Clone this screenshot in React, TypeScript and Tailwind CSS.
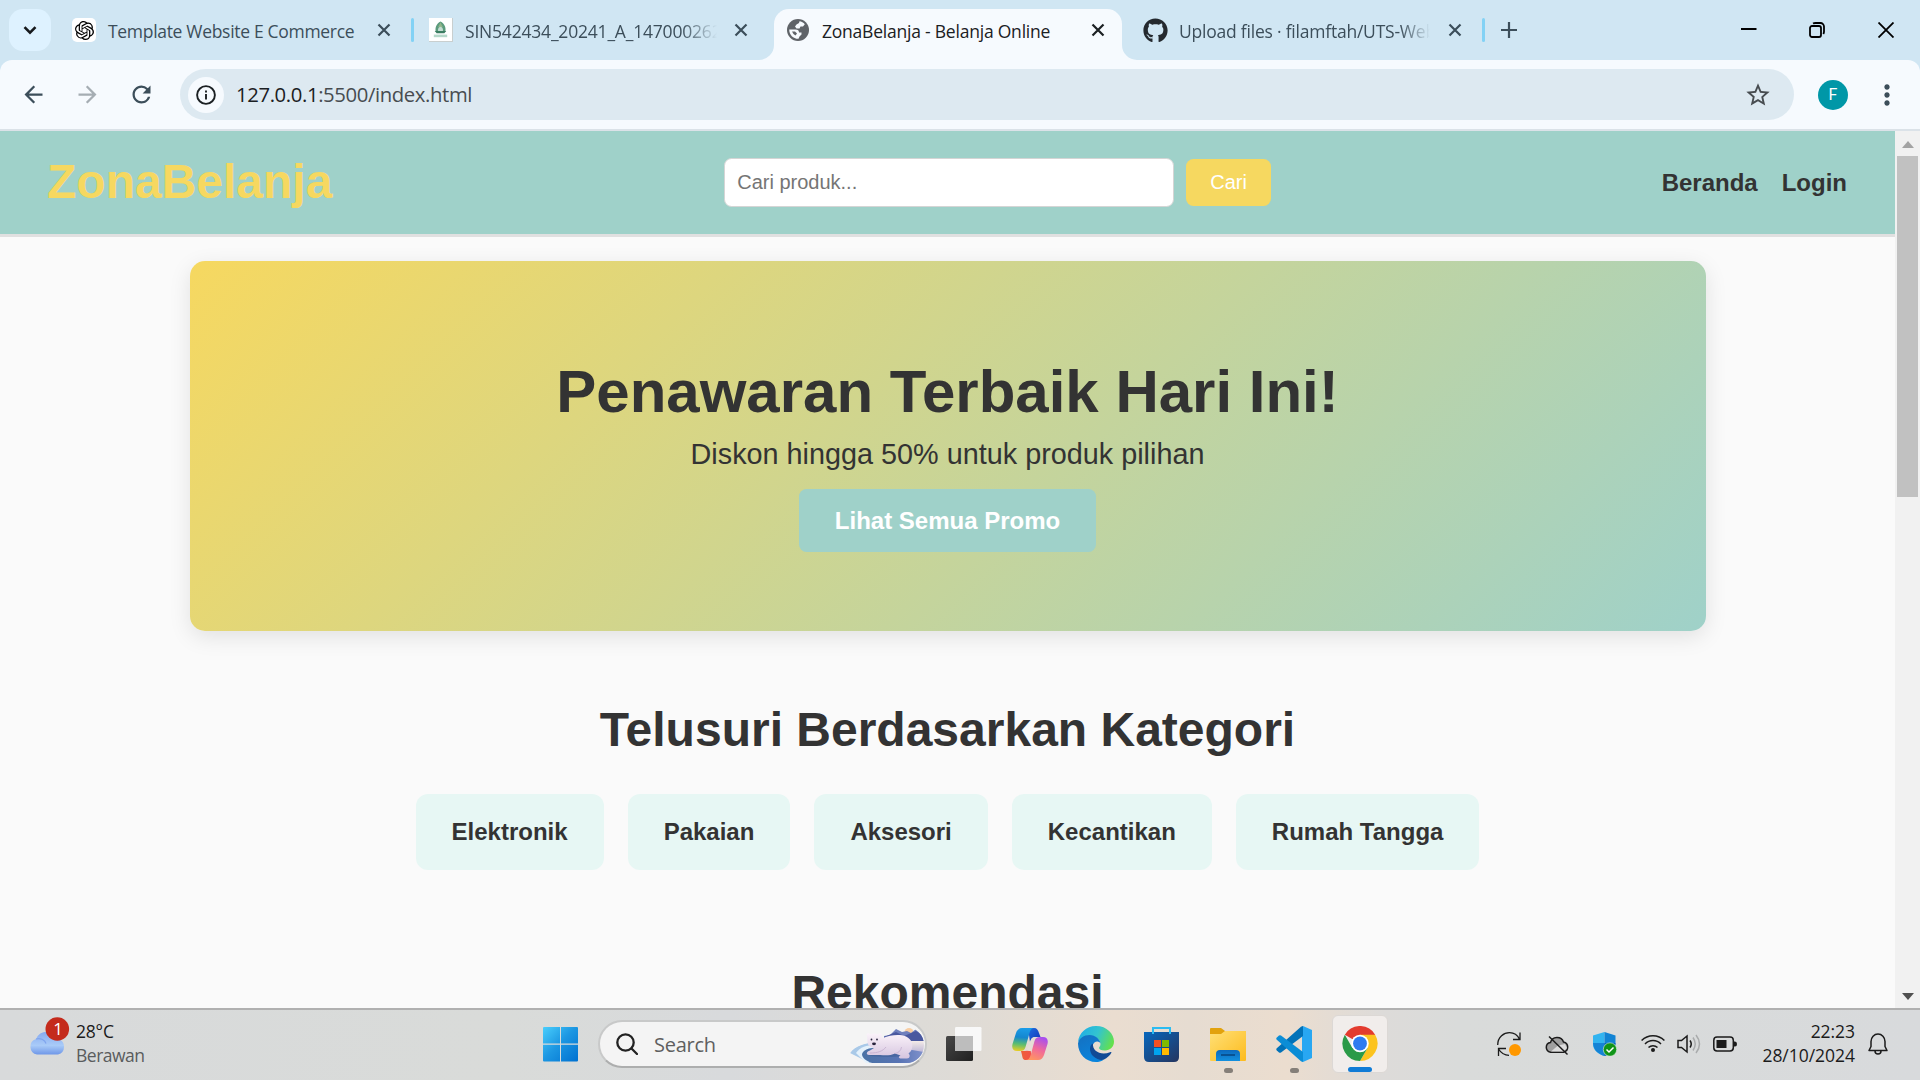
import React from "react";
import { MdArrowBack, MdArrowForward, MdRefresh, MdStarOutline, MdMoreVert } from "react-icons/md";
import { FaGithub } from "react-icons/fa";
import { SiOpenai } from "react-icons/si";

const categories = ["Elektronik", "Pakaian", "Aksesori", "Kecantikan", "Rumah Tangga"];

function Close({ className = "" }: { className?: string }) {
  return (
    <svg viewBox="0 0 14 14" className={`h-3.5 w-3.5 shrink-0 ${className}`} fill="none" stroke="currentColor" strokeWidth="2.2">
      <path d="M1.5 1.5 12.5 12.5M12.5 1.5 1.5 12.5" />
    </svg>
  );
}

function Flare({ flip = false }: { flip?: boolean }) {
  return (
    <svg viewBox="0 0 15 15" className={flip ? "h-[15px] w-[15px] shrink-0 -scale-x-100 self-end" : "h-[15px] w-[15px] shrink-0 self-end"}>
      <path d="M15 0V15H0A15 15 0 0 0 15 0Z" fill="#f6fafe" />
    </svg>
  );
}

function Crest() {
  return (
    <span className="flex h-6 w-6 shrink-0 border-r border-b border-[#c9cfcf] bg-white">
      <svg viewBox="0 0 24 24" className="h-6 w-6">
        <path d="M12 3C8 5 6 9 7 14H17C18 9 16 5 12 3Z" fill="#5b9b7d" />
        <path d="M12 4 9.5 9H14.5Z" fill="#8fb58a" />
        <path d="M12 8.500C10 9 9 11 9.500 13H14.500C15 11 14 9 12 8.500Z" fill="#c3dcd2" />
        <path d="M6 13H18L16 15.500H8Z" fill="#3b7d62" />
        <path d="M5 16.800H19V19.500H5Z" fill="#b5d8ca" />
      </svg>
    </span>
  );
}

function Globe() {
  return (
    <svg viewBox="0 0 22 22" className="ml-[13px] h-[22px] w-[22px] shrink-0">
      <circle cx="11" cy="11" r="11" fill="#5f6368" />
      <path d="M12.500 2.200C14.500 2.500 16.500 3.500 17.800 5.200L16 7.500H13.500L12.500 9.500H9.500L8 7.500 9.500 5.500 12 4Z" fill="#f6fafe" />
      <path d="M2.200 10.500H8.500C11 10.500 12 11.500 12 13.500H14.500V15.500L12.500 17.500 11.500 19.800C6.500 20 2.200 16 2.200 10.500Z" fill="#f6fafe" />
      <path d="M5 12.500H8L10 14.500 8.500 16.500 6.500 15Z" fill="#5f6368" />
    </svg>
  );
}

function TabStrip() {
  return (
    <div className="flex h-[60px] items-center text-[17.5px] leading-6 whitespace-nowrap text-[#3c4e5a]">
      <div className="ml-[9px] flex h-[42px] w-[42px] shrink-0 items-center justify-center rounded-[14px] bg-[#def2ff] text-[#16191c]">
        <svg viewBox="0 0 14 9" className="h-[9px] w-[14px]" fill="none" stroke="currentColor" strokeWidth="2.6">
          <path d="M1.5 1.2 7 6.7 12.5 1.2" />
        </svg>
      </div>
      <div className="ml-[21px] flex h-6 w-6 shrink-0 items-center justify-center rounded-[5px] bg-white text-black">
        <SiOpenai size={19} />
      </div>
      <span className="ml-3 w-[269px] pt-[2px] tracking-[-0.31px]">Template Website E Commerce</span>
      <Close />
      <span className="ml-5 h-6 w-[3px] shrink-0 rounded-full bg-[#83d2f5]" />
      <span className="ml-[15px] flex"><Crest /></span>
      <span className="ml-3 w-[252px] shrink-0 overflow-hidden [mask-image:linear-gradient(to_right,black_86%,transparent)] pt-[2px] tracking-[-0.2px]">SIN542434_20241_A_1470002625</span>
      <Close className="ml-[17px]" />
      <div className="ml-[11px] flex h-full shrink-0">
        <Flare />
        <div className="mt-[9px] flex h-[51px] w-[348px] items-center rounded-t-[15px] bg-[#f6fafe] pb-[9px] text-[#1b2023]">
          <Globe />
          <span className="ml-[13px] w-[269px] pt-[2px] tracking-[-0.22px]">ZonaBelanja - Belanja Online</span>
          <Close />
        </div>
        <Flare flip />
      </div>
      <FaGithub size={25} className="ml-1.5 shrink-0 text-[#24292e]" />
      <span className="ml-[11px] w-[251px] shrink-0 overflow-hidden [mask-image:linear-gradient(to_right,black_88%,transparent)] pt-[2px] tracking-[-0.22px]">Upload files · filamftah/UTS-Web</span>
      <Close className="ml-[18px]" />
      <span className="ml-5 h-6 w-[3px] shrink-0 rounded-full bg-[#83d2f5]" />
      <svg viewBox="0 0 16 16" className="ml-4 h-4 w-4 shrink-0" stroke="currentColor" strokeWidth="2.2">
        <path d="M8 0V16M0 8H16" />
      </svg>
      <div className="mr-[26px] ml-auto flex items-center text-black">
        <svg viewBox="0 0 16 16" className="h-4 w-4" stroke="currentColor" strokeWidth="2"><path d="M0 7H15.5" /></svg>
        <svg viewBox="0 0 16 16" className="ml-[52px] h-4 w-4" fill="none" stroke="currentColor" strokeWidth="1.8">
          <rect x="1" y="4" width="11" height="11" rx="2" />
          <path d="M4 1.6C5 1 5.500 1 6.500 1H11.500A3.500 3.500 0 0 1 15 4.500V9.500C15 10.500 15 11 14.300 12" />
        </svg>
        <svg viewBox="0 0 16 16" className="ml-[53px] h-4 w-4" stroke="currentColor" strokeWidth="1.8"><path d="M.5.5 15.500 15.500M15.500.5.5 15.500" /></svg>
      </div>
    </div>
  );
}

function Toolbar() {
  return (
    <div className="flex h-[71px] items-center rounded-t-xl border-b-2 border-[#dbe2e8] bg-[#f6fafe] text-[#3c4e5a]">
      <MdArrowBack size={27} className="ml-[19.5px]" />
      <MdArrowForward size={27} className="ml-[27px] text-[#a5adb3]" />
      <MdRefresh size={27} className="ml-[27px]" />
      <div className="ml-[25.5px] flex h-[51px] w-[1614px] items-center rounded-full bg-[#dde9f1]">
        <div className="ml-[7.5px] flex h-9 w-9 items-center justify-center rounded-full bg-[#f6fafe] text-[#1b2023]">
          <svg viewBox="0 0 20 20" className="h-5 w-5" fill="none" stroke="currentColor" strokeWidth="1.9">
            <circle cx="10" cy="10" r="8.9" />
            <path d="M10 9V14.500M10 5.500V7.500" />
          </svg>
        </div>
        <span className="ml-[12.5px] text-[20.3px] tracking-[-0.38px] text-[#474c50]"><span className="text-[#1b2023]">127.0.0.1</span>:5500/index.html</span>
        <MdStarOutline size={28} className="mr-[22px] ml-auto text-[#474c50]" />
      </div>
      <div className="ml-6 flex h-[30px] w-[30px] items-center justify-center rounded-full bg-[#0097a7] pt-px font-[Roboto] text-base text-white">F</div>
      <MdMoreVert size={32} className="ml-[23px] text-[#3c4e5a]" />
    </div>
  );
}

function Page() {
  return (
    <div className="flex h-[877px] overflow-hidden bg-[#fafafa] font-['Liberation_Sans',Arial,sans-serif] text-[#333]">
      <div className="w-[1895px] shrink-0">
        <header className="flex h-[106px] items-center justify-between border-b-[3px] border-[#e0e0e0] bg-[#9fd1c9] px-12">
          <div className="-ml-px pr-px pb-px text-5xl font-bold text-[#f6d860]">ZonaBelanja</div>
          <div className="flex items-center gap-3 text-xl">
            <div className="flex h-[49px] w-[450px] items-center rounded-[7.5px] border border-[#d5d5d5] bg-white px-3 pb-[2px] text-[#757575]">Cari produk...</div>
            <div className="flex h-[47px] items-center rounded-[7.5px] bg-[#f6d860] px-6 pb-px text-white">Cari</div>
          </div>
          <nav className="flex gap-6 text-2xl font-bold"><span>Beranda</span><span>Login</span></nav>
        </header>
        <section className="mx-auto mt-6 flex h-[370px] w-[1516px] flex-col items-center rounded-[15px] bg-[linear-gradient(135deg,#f6d860,#9fd1c9)] pt-[97px] shadow-[0_6px_22px_rgba(0,0,0,0.1)]">
          <h1 className="text-6xl leading-[68px] font-bold">Penawaran Terbaik Hari Ini!</h1>
          <p className="mt-[11px] text-[28.8px] leading-[34px]">Diskon hingga 50% untuk produk pilihan</p>
          <div className="mt-[18px] flex h-[63px] items-center rounded-[7.5px] bg-[#9fd1c9] px-9 text-2xl font-bold text-white">Lihat Semua Promo</div>
        </section>
        <h2 className="mt-[72px] text-center text-5xl leading-[54px] font-bold">Telusuri Berdasarkan Kategori</h2>
        <div className="mt-[37px] flex justify-center gap-6">
          {categories.map((c) => (
            <div key={c} className="flex h-[76px] items-center rounded-xl bg-[#e7f7f4] px-9 text-2xl font-bold">{c}</div>
          ))}
        </div>
        <h2 className="mt-24 text-center text-5xl leading-[54px] font-bold">Rekomendasi</h2>
      </div>
      <div className="flex w-[25px] flex-col items-center bg-[#f1f1f1]">
        <svg viewBox="0 0 12 7" className="mt-[10px] h-[7px] w-3"><path d="M0 7 6 0 12 7Z" fill="#a3a3a3" /></svg>
        <div className="mt-2 h-[341px] w-[21px] bg-[#c1c1c1]" />
        <svg viewBox="0 0 12 7" className="mt-auto mb-[8px] h-[7px] w-3"><path d="M0 0 6 7 12 0Z" fill="#505050" /></svg>
      </div>
    </div>
  );
}

function WeatherIcon() {
  return (
    <svg viewBox="0 0 42 42" className="h-[42px] w-[42px]">
      <defs><linearGradient id="cl" x1="0" y1="0" x2="0" y2="1"><stop offset="0" stopColor="#86aaf0" /><stop offset=".6" stopColor="#a9cbf8" /><stop offset="1" stopColor="#6f97e8" /></linearGradient></defs>
      <path d="M9 39.500A8 8 0 0 1 8 24 12 12 0 0 1 30 24 8 8 0 0 1 30 39.500Z" fill="url(#cl)" />
      <path d="M8 24C13 22.500 17 25.500 18 28.500" fill="none" stroke="#7fa4ee" strokeWidth="1.200" />
      <circle cx="29.300" cy="14" r="11.800" fill="#c42b1c" />
      <text x="30" y="20" textAnchor="middle" fontSize="17" fill="#fff" fontFamily="Open Sans">1</text>
    </svg>
  );
}

function PolarBear() {
  return (
    <svg viewBox="0 0 74 36" className="h-9 w-[74px]">
      <defs>
        <linearGradient id="sea" x1="0" x2="1"><stop offset="0" stopColor="#4a72a5" /><stop offset=".6" stopColor="#5874b4" /><stop offset="1" stopColor="#8192cc" /></linearGradient>
        <linearGradient id="sky" x1="0" y1="0" x2="0" y2="1"><stop offset="0" stopColor="#f4ebe8" /><stop offset=".45" stopColor="#c4bdd9" /><stop offset="1" stopColor="#6c84c1" /></linearGradient>
        <linearGradient id="fur" x1="0" y1="0" x2="0" y2="1"><stop offset="0" stopColor="#fbf3fa" /><stop offset="1" stopColor="#d6c5df" /></linearGradient>
        <clipPath id="bay"><path d="M34 0H56A18 18 0 0 1 56 36H16C6 34 1 29 0 26 6 18 20 14 34 15Z" /></clipPath>
      </defs>
      <g clipPath="url(#bay)">
        <path d="M34 14H74V36H34Z" fill="url(#sky)" />
        <circle cx="59" cy="5.500" r="4.500" fill="#f7cda3" />
        <path d="M34 9 40 8 46 2 52 5 57 4 61 6 66 2 74 6V14H34Z" fill="#6f7fbd" />
        <path d="M34 10 46 5 54 9 66 4 74 9V14H34Z" fill="#4a589f" />
        <path d="M0 26C8 14 30 14 40 18L20 36Z" fill="#a9c9e8" />
        <path d="M6 26C12 17 24 17 34 19L18 36H16Z" fill="#e4f1fb" />
        <path d="M12 27C14 20 30 19 50 21L74 25V36H22C16 34 12 31 12 27Z" fill="url(#sea)" />
      </g>
      <ellipse cx="38" cy="27.500" rx="20" ry="2.500" fill="#3f5f96" opacity=".6" />
      <path d="M17 9.500C15.500 7 18 5 20 7.200 22 6.300 26 6.300 28 7.200 30 5 33 6.500 31.500 9.500L33 11C40 8 50 7 56 9.500 62 12.500 64 18 61 24L58.500 26.500C60.500 28 60 31.500 57 31.500H51.500C48.500 31.500 48 29.500 50.500 28.500L45 26.500C41 28.500 36 28.500 30 28H19C15.500 27.500 16.500 24.500 20 23.500L24 21C20 20 17.500 18 17.500 15Z" fill="url(#fur)" />
      <path d="M20 26C28 26 33 24 36 20M45 26.500C48 26 51 24 51.500 20" fill="none" stroke="#c5b1d0" strokeWidth=".9" />
      <circle cx="21.500" cy="12.500" r=".9" fill="#28233c" /><circle cx="27" cy="12.500" r=".9" fill="#28233c" /><ellipse cx="24" cy="16.800" rx="2" ry="1.400" fill="#28233c" />
    </svg>
  );
}

function TaskView() {
  return (
    <svg viewBox="0 0 36 36" className="h-9 w-9">
      <defs><linearGradient id="tv" x1="0" y1="0" x2="1" y2="1"><stop offset="0" stopColor="#474747" /><stop offset="1" stopColor="#202020" /></linearGradient></defs>
      <rect x="0" y="10" width="27" height="25" rx="1.500" fill="url(#tv)" />
      <rect x="9" y="1" width="26.500" height="24" rx="1.200" fill="#f8f8f8" />
      <path d="M9 10H27V25H10L9 24Z" fill="#bdbdbd" />
    </svg>
  );
}

function Copilot() {
  return (
    <svg viewBox="0 0 36 36" className="h-9 w-9">
      <defs>
        <linearGradient id="ca" x1=".4" y1="0" x2=".3" y2="1"><stop offset="0" stopColor="#1b9ce8" /><stop offset=".4" stopColor="#1587cf" /><stop offset=".7" stopColor="#5cbd71" /><stop offset="1" stopColor="#e8ce25" /></linearGradient>
        <linearGradient id="cb" x1=".7" y1="0" x2=".3" y2="1"><stop offset="0" stopColor="#a74ef0" /><stop offset=".5" stopColor="#f0699b" /><stop offset="1" stopColor="#ff9660" /></linearGradient>
        <linearGradient id="cc" x1="0" y1="0" x2="1" y2="1"><stop offset="0" stopColor="#1d6fe0" /><stop offset="1" stopColor="#1733b7" /></linearGradient>
        <linearGradient id="cd" x1="0" y1="0" x2="1" y2="0"><stop offset="0" stopColor="#ee6038" /><stop offset="1" stopColor="#f2504a" /></linearGradient>
      </defs>
      <path d="M16 2H22C25 2 26 4 27 7L28.500 11H24C20 11 19 13 18 16Z" fill="url(#cc)" />
      <path d="M20 34H14C11 34 10.500 32 10 29L9 25H13C16 25 17 23 18 20Z" fill="url(#cd)" />
      <path d="M10 2H22C19 2 18 5 17 9L13.500 21C12.500 24 11 25 8 25H5C1 25-.5 22 .5 18L4 7C5 4 7 2 10 2Z" fill="url(#ca)" />
      <path d="M26 34H14C17 34 18 31 19 28L22.500 15C23.500 12 25 11 28 11H31C35 11 36.500 14 35.500 18L32 29C31 32 29 34 26 34Z" fill="url(#cb)" />
      <path d="M19.500 12.500C20.500 11.300 22 11 24 11.200 22.800 12 22.300 13.500 22 15L19 25C18 24.800 16 25 14.500 24.800Z" fill="#e6ddd6" />
    </svg>
  );
}

function Edge() {
  return (
    <svg viewBox="0 0 36 36" className="h-9 w-9">
      <defs>
        <linearGradient id="ea" x1="0" y1=".3" x2="1" y2=".6"><stop offset="0" stopColor="#1faee6" /><stop offset=".5" stopColor="#33c4cf" /><stop offset="1" stopColor="#65e14a" /></linearGradient>
        <linearGradient id="eb" x1="0" y1="0" x2=".5" y2="1"><stop offset="0" stopColor="#1570c0" /><stop offset="1" stopColor="#0a84dc" /></linearGradient>
      </defs>
      <path d="M0 16C1 7 8 0 18 0 29 0 36 8 36 15.500 36 21 32 24.500 27 24.500 23 24.500 21 23 21 22 21 21 22.500 20.500 22.500 18 22.500 14 18 10 12 10 6 10 2 13 0 16Z" fill="url(#ea)" />
      <path d="M0 17.500C1 12 6 9 11.500 9 17.500 9 22.500 13.500 22.500 18 22.500 15 16 13.500 14.500 20 13.500 27 20 33.500 26 33.500 23.500 35.500 20.500 36 18 36 8 36 0 28 0 17.500Z" fill="url(#eb)" />
      <path d="M15 17.500C11 19 11 26 15 30 19 34 24 34.500 26 33.500 29 32 32 29.500 33.500 26.500 33.500 25.800 33 25.700 32 26.200 23 30 14 25 15 17.500Z" fill="#114a95" />
    </svg>
  );
}

function Store() {
  return (
    <svg viewBox="0 0 36 36" className="h-9 w-9">
      <defs><linearGradient id="st" x1="0" y1="0" x2="1" y2="1"><stop offset="0" stopColor="#0767bd" /><stop offset="1" stopColor="#25355f" /></linearGradient></defs>
      <path d="M0 6H35V31Q35 36 30 36H5Q0 36 0 31Z" fill="url(#st)" />
      <path d="M9 8V2H26V8" fill="none" stroke="#2bbcf2" strokeWidth="2" />
      <path d="M10 14H17V21H10Z" fill="#f25022" /><path d="M18 14H25V21H18Z" fill="#7fba00" />
      <path d="M10 22H17V29H10Z" fill="#00a4ef" /><path d="M18 22H25V29H18Z" fill="#ffb900" />
    </svg>
  );
}

function Folder() {
  return (
    <svg viewBox="0 0 36 36" className="h-9 w-9">
      <defs><linearGradient id="fo" x1="0" y1="0" x2="1" y2="1"><stop offset="0" stopColor="#ffe077" /><stop offset="1" stopColor="#fdbb1d" /></linearGradient>
        <linearGradient id="fp" x1="0" y1="0" x2="0" y2="1"><stop offset="0" stopColor="#0c69bd" /><stop offset="1" stopColor="#1390df" /></linearGradient></defs>
      <path d="M0 3Q0 2 1 2H11L15 5H35Q36 5 36 6V10H0Z" fill="#e2a20d" />
      <path d="M0 8H11L15 5H36V34Q36 35 35 35H1Q0 35 0 34Z" fill="url(#fo)" />
      <path d="M6 35V28Q6 24 10 24H26Q30 24 30 28V35Z" fill="url(#fp)" />
      <path d="M11 29H25" stroke="#07457f" strokeWidth="1.500" />
    </svg>
  );
}

function Code() {
  return (
    <svg viewBox="0 0 36 36" className="h-9 w-9">
      <path d="M27 0 36 4V32L27 36 26 27V9Z" fill="#28a7f2" />
      <path d="M27 0V10L5 26.500Q4 27.200 3 26.500L.8 24.500Q-.3 23.300.8 22.200L25 .8Q26 0 27 0Z" fill="#0272b8" />
      <path d="M27 36V26L5 9.500Q4 8.800 3 9.500L.8 11.500Q-.3 12.700.8 13.800L25 35.200Q26 36 27 36Z" fill="#0b8dd6" />
    </svg>
  );
}

function Chrome() {
  return (
    <svg viewBox="0 0 36 36" className="h-9 w-9">
      <path d="M18 18 2.400 9A18 18 0 0 1 33.600 9Z" fill="#e33b2e" />
      <path d="M18 18 18 9H33.600A18 18 0 0 1 18 36L25.800 22.500Z" fill="#fcc31e" />
      <path d="M18 18 25.800 22.500 18 36A18 18 0 0 1 2.400 9L10.200 22.500Z" fill="#2a9a48" />
      <circle cx="18" cy="18" r="9" fill="#fff" /><circle cx="18" cy="18" r="7.100" fill="#2f7bf0" />
    </svg>
  );
}

function AppSlot({ children, state = "closed" }: { children: React.ReactNode; state?: "closed" | "running" | "active" }) {
  return (
    <div className="flex h-full w-[66px] justify-center">
      <div className={state === "active" ? "mt-[5px] flex h-[58px] w-14 flex-col items-center rounded-md border border-[#dcd8d5] bg-[#f1edeb] pt-[10px]" : "mt-[5px] flex h-[58px] w-14 flex-col items-center pt-[11px]"}>
        {children}
        {state === "running" && <span className="mt-[6px] h-[5px] w-[9px] shrink-0 rounded-full bg-[#857f79]" />}
        {state === "active" && <span className="mt-[6px] h-[5px] w-6 shrink-0 rounded-full bg-[#0f7bd6]" />}
      </div>
    </div>
  );
}

function Tray() {
  return (
    <div className="ml-auto flex h-[68px] items-center text-[#1b1b1b]">
      <svg viewBox="0 0 24 24" className="h-6 w-6" fill="none" stroke="currentColor" strokeWidth="1.300">
        <path d="M.7 13C.7 5 7 .7 12.500 .7 17 .7 20.500 3 22.500 7.300M23 .5V7.500H16M1.500 24V16.500H9M1.500 17C4 21 8 23.300 12 23.300" />
        <circle cx="18" cy="18" r="6" fill="#ff9800" stroke="none" />
      </svg>
      <svg viewBox="0 0 24 24" className="ml-6 h-6 w-6" fill="none" stroke="currentColor" strokeWidth="1.500">
        <path d="M5.500 20.200A4.900 4.900 0 0 1 5.500 10.500 6.800 6.800 0 0 1 18.500 10 5.200 5.200 0 0 1 18.500 20.200Z" fill="#a0a0a0" />
        <path d="M6 19.500 13 13.500 20 12 22 16 18.500 19.500Z" fill="#dcdcdc" stroke="none" />
        <path d="M4 4.500 22.500 22.500" />
      </svg>
      <svg viewBox="0 0 24 24" className="ml-6 h-6 w-6">
        <path d="M11.500 0 0 3.500V12C0 18 5 22 11.500 24Z" fill="#32b4f0" /><path d="M11.500 0 22.500 3.500V12C22.500 18 18 22 11.500 24Z" fill="#1183d4" />
        <path d="M0 11H11.500V24C5 22 .5 18 0 11Z" fill="#1683d5" /><path d="M11.500 11H22.500C22 18 17 22 11.500 24Z" fill="#0b62b8" />
        <circle cx="17" cy="17.500" r="6.700" fill="#109418" stroke="#e0eee0" strokeWidth=".6" /><path d="M13.500 17.500 16 20 20.500 15.500" fill="none" stroke="#fff" strokeWidth="1.500" />
      </svg>
      <svg viewBox="0 0 24 24" className="ml-6 h-6 w-6" fill="none" stroke="currentColor" strokeWidth="1.500">
        <path d="M.6 8.500C7 2 17 2 23.400 8.500M4 12C8.500 7.300 15.500 7.300 20 12M7.500 15.500C10 13 14 13 16.500 15.500" /><circle cx="12" cy="18" r="2" fill="currentColor" stroke="none" />
      </svg>
      <svg viewBox="0 0 24 24" className="ml-3 h-6 w-6" fill="none" stroke="currentColor" strokeWidth="1.500">
        <path d="M1 8.500H4.500L10 4V20L4.500 15.500H1ZM13 8.500Q15.500 12 13 15.500" /><path d="M16 5.500Q20.500 12 16 18.500M19 3Q26 12 19 21" stroke="#a9abac" />
      </svg>
      <svg viewBox="0 0 24 24" className="ml-3 h-6 w-6" fill="none" stroke="currentColor" strokeWidth="1.500">
        <rect x=".8" y="5" width="19.500" height="14" rx="3.200" /><path d="M3.500 8H13.500V16H3.500Z" fill="currentColor" stroke="none" /><path d="M21 9.500H22Q24 9.500 24 12T22 14.500H21Z" fill="currentColor" stroke="none" />
      </svg>
      <div className="w-[118px] pb-[2px] text-right text-[17.5px] leading-6">
        <div className="tracking-[-0.05px]">22:23</div><div className="tracking-[-0.03px]">28/10/2024</div>
      </div>
      <svg viewBox="0 0 20 24" className="mr-[32px] ml-[13px] h-6 w-5" fill="none" stroke="currentColor" strokeWidth="1.500">
        <path d="M1 18.500 3 14.500V9.500A7 7.500 0 0 1 17 9.500V14.500L19 18.500ZM7 19A3 3 0 0 0 13 19" strokeLinejoin="round" />
      </svg>
    </div>
  );
}

function Taskbar() {
  return (
    <div className="flex h-[72px] border-t-2 border-[#b0b0b0] bg-[linear-gradient(to_right,#d8dadb_0%,#d9dbd9_26%,#d8dadc_38%,#dedbd6_50%,#eaddd0_58%,#e6dcd1_62%,#ebddcf_67%,#dddbd9_72%,#d9dbda_76%,#d8dadc_100%)]">
      <div className="flex w-[543px] pt-[5px] pl-[28px]">
        <WeatherIcon />
        <div className="ml-[6px] pt-1 text-[17.5px] leading-6 text-[#1b1b1b]">
          <div className="tracking-[-0.2px]">28°C</div><div className="tracking-[-0.5px] text-[#5a5c5d]">Berawan</div>
        </div>
      </div>
      <svg viewBox="0 0 36 36" className="mt-4 h-9 w-9">
        <defs><linearGradient id="wn" gradientUnits="userSpaceOnUse" x1="0" y1="0" x2="34" y2="34"><stop offset="0" stopColor="#4bd0fd" /><stop offset=".5" stopColor="#1c97e2" /><stop offset="1" stopColor="#0173d2" /></linearGradient></defs>
        <path d="M0 2Q0 1 1 1H17V17.500H0ZM18 1H34Q35 1 35 2V17.500H18ZM0 18.800H17V35.500H1Q0 35.500 0 34.500ZM18 18.800H35V34.500Q35 35.500 34 35.500H18Z" fill="url(#wn)" />
      </svg>
      <div className="mt-[10px] ml-[19px] flex h-[48px] w-[329px] shrink-0 items-center rounded-full border-2 border-[#c8c9c9] border-b-[#adaeae] bg-[#f4f4f4]">
        <svg viewBox="0 0 22 22" className="ml-4 h-[22px] w-[22px]" fill="none" stroke="#222" strokeWidth="2.300"><circle cx="9.500" cy="9.500" r="8.200" /><path d="M15.500 15.500 21 21" strokeLinecap="round" /></svg>
        <span className="ml-4 pt-px text-[20px] leading-6 tracking-[-0.25px] text-[#5f5f5f]">Search</span>
        <span className="mr-[1px] ml-auto flex pt-px"><PolarBear /></span>
      </div>
      <div className="ml-[4px] flex h-full">
        <AppSlot><TaskView /></AppSlot>
        <AppSlot><Copilot /></AppSlot>
        <AppSlot><Edge /></AppSlot>
        <AppSlot><Store /></AppSlot>
        <AppSlot state="running"><Folder /></AppSlot>
        <AppSlot state="running"><Code /></AppSlot>
        <AppSlot state="active"><Chrome /></AppSlot>
      </div>
      <Tray />
    </div>
  );
}

export default function App() {
  return (
    <div className="h-[1080px] w-[1920px] overflow-hidden bg-[#d0e6f3] font-['Open_Sans','Noto_Sans',sans-serif]">
      <TabStrip />
      <Toolbar />
      <Page />
      <Taskbar />
    </div>
  );
}
